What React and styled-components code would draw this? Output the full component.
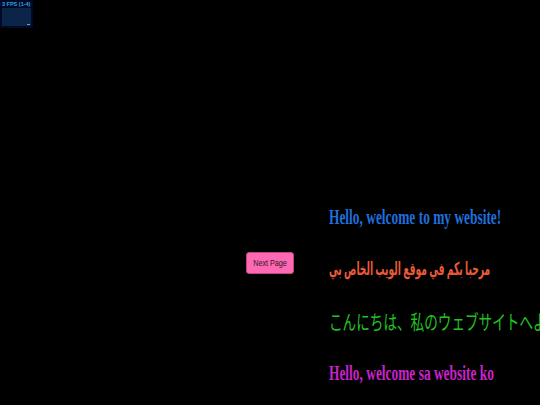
import React from "react";
import styled, { createGlobalStyle } from "styled-components";

const GlobalStyle = createGlobalStyle`
  html, body {
    margin: 0;
    padding: 0;
    background: #000;
    width: 540px;
    height: 405px;
    overflow: hidden;
  }
`;

const Stage = styled.div`
  position: relative;
  width: 540px;
  height: 405px;
  display: flex;
  align-items: flex-start;
  padding-left: 246px;
  gap: 35px;
  box-sizing: border-box;
`;

const Stats = styled.div`
  position: absolute;
  top: 0;
  left: 0;
  width: 33px;
  height: 28px;
  background: #000a26;
  padding: 1px 2px 2px;
  box-sizing: border-box;
  display: flex;
  flex-direction: column;
`;

const StatsLabel = styled.div`
  font-family: "Liberation Sans", Arial, sans-serif;
  font-size: 5.5px;
  font-weight: bold;
  line-height: 6px;
  color: #2fa3e0;
  white-space: nowrap;
`;

const StatsGraph = styled.div`
  flex: 1;
  margin-top: 1px;
  background: #0b2448;
  position: relative;
`;

const StatsTick = styled.div`
  position: absolute;
  right: 1px;
  bottom: 1px;
  width: 3px;
  height: 1px;
  background: #3bb0e8;
`;

const Button = styled.button`
  margin-top: 252px;
  width: 48px;
  height: 22px;
  flex-shrink: 0;
  padding: 0;
  border: 1px solid #b8487f;
  border-radius: 3px;
  background: #ff69b4;
  color: #2e1826;
  font-family: "Liberation Sans", Arial, sans-serif;
  font-size: 9px;
  display: flex;
  align-items: center;
  justify-content: center;
  cursor: pointer;
`;

const ButtonText = styled.span`
  display: inline-block;
  white-space: nowrap;
  transform: scaleX(0.8);
`;

const Lines = styled.div`
  margin-top: 206px;
  display: flex;
  flex-direction: column;
  gap: 29px;
`;

const Line = styled.div`
  width: max-content;
  height: 23px;
  line-height: 23px;
  font-size: ${(p) => p.size || 20}px;
  white-space: nowrap;
  color: ${(p) => p.color};
  font-family: ${(p) =>
    p.cjk
      ? `"Noto Sans CJK JP", sans-serif`
      : `"Liberation Serif", "Times New Roman", "DejaVu Sans", serif`};
  font-weight: ${(p) => (p.cjk ? 400 : 700)};
  transform: scaleX(${(p) => p.squeeze || 0.67});
  transform-origin: left center;
`;

const App = () => {
  return (
    <>
      <GlobalStyle />
      <Stage>
        <Stats>
          <StatsLabel>3 FPS (1-4)</StatsLabel>
          <StatsGraph>
            <StatsTick />
          </StatsGraph>
        </Stats>

        <Button>
          <ButtonText>Next Page</ButtonText>
        </Button>

        <Lines>
          <Line color="#1f6fdc">Hello, welcome to my website!</Line>
          <Line color="#e85a3a" dir="rtl" size={18} squeeze={0.51}>
            مرحبا بكم في موقع الويب الخاص بي
          </Line>
          <Line color="#22c322" cjk squeeze={0.68}>
            こんにちは、私のウェブサイトへようこそ
          </Line>
          <Line color="#cc22cc">Hello, welcome sa website ko</Line>
        </Lines>
      </Stage>
    </>
  );
};

export default App;
